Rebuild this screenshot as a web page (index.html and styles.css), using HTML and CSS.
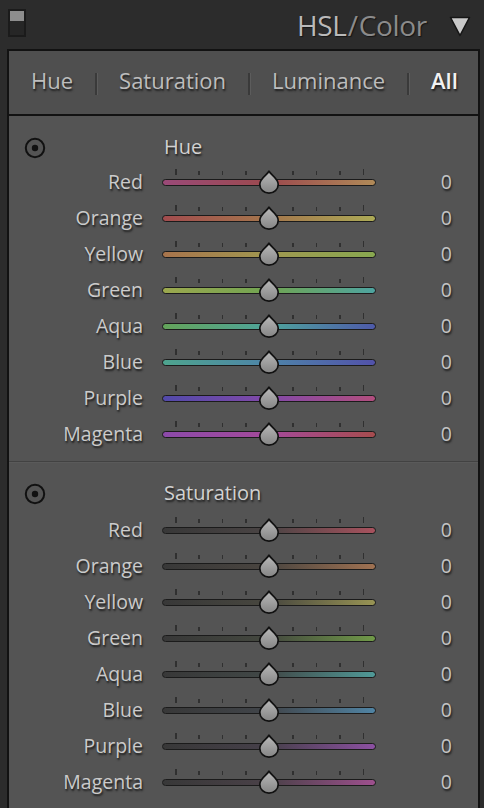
FILE: index.html
```html
<!DOCTYPE html>
<html>
<head>
<meta charset="utf-8">
<link rel="stylesheet" href="styles.css">
</head>
<body>
<svg width="0" height="0" class="defs" aria-hidden="true">
  <defs>
    <linearGradient id="knob" x1="0" y1="0" x2="0" y2="1">
      <stop offset="0" stop-color="#b9b9b9"/>
      <stop offset="1" stop-color="#858585"/>
    </linearGradient>
    <symbol id="thumb" viewBox="0 0 22 24">
      <path d="M11 1.2 C12.8 5 20.2 8.2 20.2 14.4 A9.2 8.7 0 0 1 1.8 14.4 C1.8 8.2 9.2 5 11 1.2 Z" fill="url(#knob)" stroke="#111" stroke-width="1.7" stroke-linejoin="round"/>
    </symbol>
    <symbol id="target" viewBox="0 0 22 22">
      <circle cx="11" cy="11" r="9.2" fill="none" stroke="#111" stroke-width="2"/>
      <circle cx="11" cy="11" r="3.2" fill="#111"/>
    </symbol>
  </defs>
</svg>

<header class="header">
  <div class="solo"><span class="solo-light"></span></div>
  <div class="title"><span class="title-main">HSL</span><span class="title-rest slash">/</span><span class="title-rest">Color</span></div>
  <svg class="collapse" width="22" height="22" viewBox="0 0 22 22">
    <path d="M1.5 2.5 H20.5 L11 20.5 Z" fill="#c9c9c9" stroke="#151515" stroke-width="1.6" stroke-linejoin="round"/>
  </svg>
</header>

<main class="panel">
  <nav class="tabs">
    <span class="tab">Hue</span>
    <span class="sep"></span>
    <span class="tab">Saturation</span>
    <span class="sep"></span>
    <span class="tab">Luminance</span>
    <span class="sep"></span>
    <span class="tab active">All</span>
  </nav>

  <section class="group hue">
    <div class="group-head">
      <svg class="target" width="22" height="22"><use href="#target"/></svg>
      <span class="group-title">Hue</span>
    </div>
    <div class="row"><span class="label">Red</span><div class="slider"><div class="ticks"><i></i><i></i><i></i><i></i><i></i><i></i><i></i><i></i><i></i></div><div class="track t-red"></div><svg class="knob"><use href="#thumb"/></svg></div><span class="value">0</span></div>
    <div class="row"><span class="label">Orange</span><div class="slider"><div class="ticks"><i></i><i></i><i></i><i></i><i></i><i></i><i></i><i></i><i></i></div><div class="track t-orange"></div><svg class="knob"><use href="#thumb"/></svg></div><span class="value">0</span></div>
    <div class="row"><span class="label">Yellow</span><div class="slider"><div class="ticks"><i></i><i></i><i></i><i></i><i></i><i></i><i></i><i></i><i></i></div><div class="track t-yellow"></div><svg class="knob"><use href="#thumb"/></svg></div><span class="value">0</span></div>
    <div class="row"><span class="label">Green</span><div class="slider"><div class="ticks"><i></i><i></i><i></i><i></i><i></i><i></i><i></i><i></i><i></i></div><div class="track t-green"></div><svg class="knob"><use href="#thumb"/></svg></div><span class="value">0</span></div>
    <div class="row"><span class="label">Aqua</span><div class="slider"><div class="ticks"><i></i><i></i><i></i><i></i><i></i><i></i><i></i><i></i><i></i></div><div class="track t-aqua"></div><svg class="knob"><use href="#thumb"/></svg></div><span class="value">0</span></div>
    <div class="row"><span class="label">Blue</span><div class="slider"><div class="ticks"><i></i><i></i><i></i><i></i><i></i><i></i><i></i><i></i><i></i></div><div class="track t-blue"></div><svg class="knob"><use href="#thumb"/></svg></div><span class="value">0</span></div>
    <div class="row"><span class="label">Purple</span><div class="slider"><div class="ticks"><i></i><i></i><i></i><i></i><i></i><i></i><i></i><i></i><i></i></div><div class="track t-purple"></div><svg class="knob"><use href="#thumb"/></svg></div><span class="value">0</span></div>
    <div class="row"><span class="label">Magenta</span><div class="slider"><div class="ticks"><i></i><i></i><i></i><i></i><i></i><i></i><i></i><i></i><i></i></div><div class="track t-magenta"></div><svg class="knob"><use href="#thumb"/></svg></div><span class="value">0</span></div>
  </section>

  <section class="group sat">
    <div class="group-head">
      <svg class="target" width="22" height="22"><use href="#target"/></svg>
      <span class="group-title">Saturation</span>
    </div>
    <div class="row"><span class="label">Red</span><div class="slider"><div class="ticks"><i></i><i></i><i></i><i></i><i></i><i></i><i></i><i></i><i></i></div><div class="track s-red"></div><svg class="knob"><use href="#thumb"/></svg></div><span class="value">0</span></div>
    <div class="row"><span class="label">Orange</span><div class="slider"><div class="ticks"><i></i><i></i><i></i><i></i><i></i><i></i><i></i><i></i><i></i></div><div class="track s-orange"></div><svg class="knob"><use href="#thumb"/></svg></div><span class="value">0</span></div>
    <div class="row"><span class="label">Yellow</span><div class="slider"><div class="ticks"><i></i><i></i><i></i><i></i><i></i><i></i><i></i><i></i><i></i></div><div class="track s-yellow"></div><svg class="knob"><use href="#thumb"/></svg></div><span class="value">0</span></div>
    <div class="row"><span class="label">Green</span><div class="slider"><div class="ticks"><i></i><i></i><i></i><i></i><i></i><i></i><i></i><i></i><i></i></div><div class="track s-green"></div><svg class="knob"><use href="#thumb"/></svg></div><span class="value">0</span></div>
    <div class="row"><span class="label">Aqua</span><div class="slider"><div class="ticks"><i></i><i></i><i></i><i></i><i></i><i></i><i></i><i></i><i></i></div><div class="track s-aqua"></div><svg class="knob"><use href="#thumb"/></svg></div><span class="value">0</span></div>
    <div class="row"><span class="label">Blue</span><div class="slider"><div class="ticks"><i></i><i></i><i></i><i></i><i></i><i></i><i></i><i></i><i></i></div><div class="track s-blue"></div><svg class="knob"><use href="#thumb"/></svg></div><span class="value">0</span></div>
    <div class="row"><span class="label">Purple</span><div class="slider"><div class="ticks"><i></i><i></i><i></i><i></i><i></i><i></i><i></i><i></i><i></i></div><div class="track s-purple"></div><svg class="knob"><use href="#thumb"/></svg></div><span class="value">0</span></div>
    <div class="row"><span class="label">Magenta</span><div class="slider"><div class="ticks"><i></i><i></i><i></i><i></i><i></i><i></i><i></i><i></i><i></i></div><div class="track s-magenta"></div><svg class="knob"><use href="#thumb"/></svg></div><span class="value">0</span></div>
  </section>
</main>
</body>
</html>
```

FILE: styles.css
```css
html, body {
  margin: 0;
  padding: 0;
}

body {
  width: 484px;
  height: 808px;
  overflow: hidden;
  background: #2c2c2c;
  font-family: "Open Sans", "Noto Sans", sans-serif;
  color: #c9c9c9;
}

.defs {
  position: absolute;
  width: 0;
  height: 0;
}

/* ---- panel header ---- */
.header {
  height: 49px;
  display: flex;
  align-items: flex-start;
  padding: 0 13px 0 8px;
  box-sizing: border-box;
}

.solo {
  margin-top: 9px;
  width: 18px;
  height: 28px;
  box-sizing: border-box;
  border: 2px solid #1b1b1b;
  background: #262626;
}

.solo-light {
  display: block;
  height: 10px;
  background: #8d8d8d;
}

.title {
  margin-left: auto;
  margin-top: 6px;
  font-size: 28px;
  font-weight: 400;
  line-height: 38px;
  letter-spacing: -0.3px;
  text-shadow: 1px 1px 1px #151515;
}

.title-main {
  color: #bababa;
}

.title-rest {
  color: #8b8b8b;
}

.slash {
  margin: 0 1px;
}

.collapse {
  margin-left: 22px;
  margin-top: 15px;
}

/* ---- panel body ---- */
.panel {
  margin: 0 4px 0 7px;
  border: 2px solid #121212;
  border-bottom: none;
  background: #545454;
  height: 759px;
  box-sizing: border-box;
}

.tabs {
  height: 65px;
  background: #4f4f4f;
  border-bottom: 2px solid #121212;
  display: flex;
  align-items: center;
  padding: 0 0 5px 22px;
  box-sizing: border-box;
  font-size: 22px;
  text-shadow: 1px 2px 2px #1c1c1c;
}

.tab {
  color: #bdbdbd;
}

.tab.active {
  color: #f2f2f2;
  font-weight: 600;
}

.sep {
  width: 2px;
  height: 22px;
  margin: 8px 22px 0;
  background: #3a3a3a;
  box-shadow: 1px 0 0 #5c5c5c;
}

.group {
  padding: 12px 0 9px;
}

.group.hue {
  border-bottom: 1px solid #424242;
  box-shadow: 0 1px 0 #5a5a5a;
}

.group-head {
  height: 36px;
  display: flex;
  align-items: center;
}

.sat .group-head {
  margin-bottom: 2px;
}

.target {
  margin-left: 15px;
  margin-top: 4px;
}

.group-title {
  margin-left: 118px;
  font-size: 20px;
  color: #d2d2d2;
  text-shadow: 1px 2px 2px #1c1c1c;
}

.row {
  height: 36px;
  display: grid;
  grid-template-columns: 134px 214px 1fr;
  column-gap: 19px;
  align-items: start;
}

.label,
.value {
  font-size: 19.5px;
  line-height: 36px;
  text-shadow: 1px 2px 2px #1c1c1c;
  color: #cbcbcb;
}

.label {
  text-align: right;
}

.value {
  text-align: right;
  padding-right: 26px;
  color: #c4c4c4;
}

/* ---- slider ---- */
.slider {
  position: relative;
  height: 36px;
  padding-top: 5px;
  box-sizing: border-box;
}

.ticks {
  height: 6px;
  margin: 0 12px 4px 13px;
  display: flex;
  justify-content: space-between;
  align-items: flex-end;
}

.ticks i {
  display: block;
  width: 1.5px;
  height: 4px;
  background: #303030;
}

.ticks i:first-child,
.ticks i:last-child {
  height: 6px;
}

.track {
  height: 7px;
  box-sizing: border-box;
  border: 1.5px solid #1b1b1b;
  border-radius: 4px;
}

.knob {
  position: absolute;
  left: 96px;
  top: 6px;
  width: 22px;
  height: 24px;
}

/* hue ramps */
.t-red     { background: linear-gradient(to right, #9a4a78, #9c4a4e 50%, #b08a58); }
.t-orange  { background: linear-gradient(to right, #a24c4e, #a4764c 50%, #acaa56); }
.t-yellow  { background: linear-gradient(to right, #a8744c, #a09850 50%, #88a850); }
.t-green   { background: linear-gradient(to right, #9ca84e, #70a452 50%, #4ea4a0); }
.t-aqua    { background: linear-gradient(to right, #64a45a, #4ea49c 50%, #4e5aaa); }
.t-blue    { background: linear-gradient(to right, #4ea48e, #4e84a8 50%, #5252aa); }
.t-purple  { background: linear-gradient(to right, #524aaa, #8249a8 50%, #b24e7e); }
.t-magenta { background: linear-gradient(to right, #8c4aaa, #a44a9a 50%, #a64c4e); }

/* saturation ramps */
.s-red     { background: linear-gradient(to right, #383838, #4a4444 50%, #a8525e); }
.s-orange  { background: linear-gradient(to right, #383838, #4a4540 50%, #a07252); }
.s-yellow  { background: linear-gradient(to right, #383838, #48473f 50%, #989454); }
.s-green   { background: linear-gradient(to right, #383838, #44483f 50%, #709a48); }
.s-aqua    { background: linear-gradient(to right, #383838, #414847 50%, #509a98); }
.s-blue    { background: linear-gradient(to right, #383838, #41454a 50%, #5084a4); }
.s-purple  { background: linear-gradient(to right, #383838, #46404a 50%, #8c50a2); }
.s-magenta { background: linear-gradient(to right, #383838, #4a4148 50%, #9e508e); }
```
